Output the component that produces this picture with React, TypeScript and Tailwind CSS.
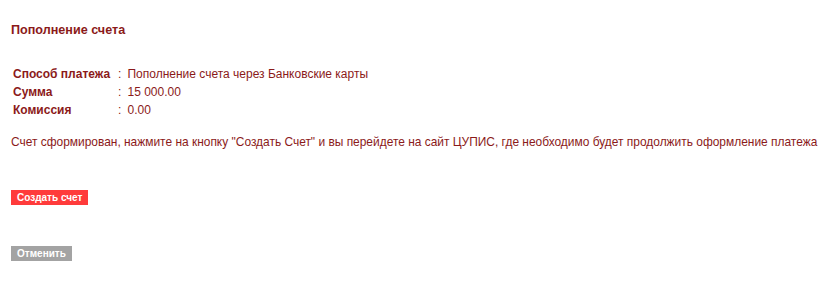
import React from "react";

export default function App() {
  return (
    <div className="min-h-[284px] w-[834px] bg-white pl-[11px] pt-[22px] text-[#8b1a1a] font-['Liberation_Sans',Arial,sans-serif]">
      <h1 className="text-[12.6px] font-bold leading-[17px]">Пополнение счета</h1>
      <table className="mt-[26px] border-collapse text-[12px]">
        <tbody>
          <tr className="h-[18px]">
            <td className="pl-[2px] pr-[8px] font-bold">Способ платежа</td>
            <td>:<span className="ml-[6px]">Пополнение счета через Банковские карты</span></td>
          </tr>
          <tr className="h-[18px]">
            <td className="pl-[2px] pr-[8px] font-bold">Сумма</td>
            <td>:<span className="ml-[6px]">15 000.00</span></td>
          </tr>
          <tr className="h-[18px]">
            <td className="pl-[2px] pr-[8px] font-bold">Комиссия</td>
            <td>:<span className="ml-[6px]">0.00</span></td>
          </tr>
        </tbody>
      </table>
      <p className="mt-[15px] text-[11.95px] leading-[16px]">
        Счет сформирован, нажмите на кнопку "Создать Счет" и вы перейдете на сайт ЦУПИС, где необходимо будет продолжить оформление платежа
      </p>
      <div className="mt-[40px] flex">
        <button className="h-[15px] bg-[#ff3b3b] px-[6px] text-[10px] font-bold leading-[15px] text-white">Создать счет</button>
      </div>
      <div className="mt-[41px] flex">
        <button className="h-[15px] bg-[#a3a3a3] px-[6px] text-[10px] font-bold leading-[15px] text-white">Отменить</button>
      </div>
    </div>
  );
}
